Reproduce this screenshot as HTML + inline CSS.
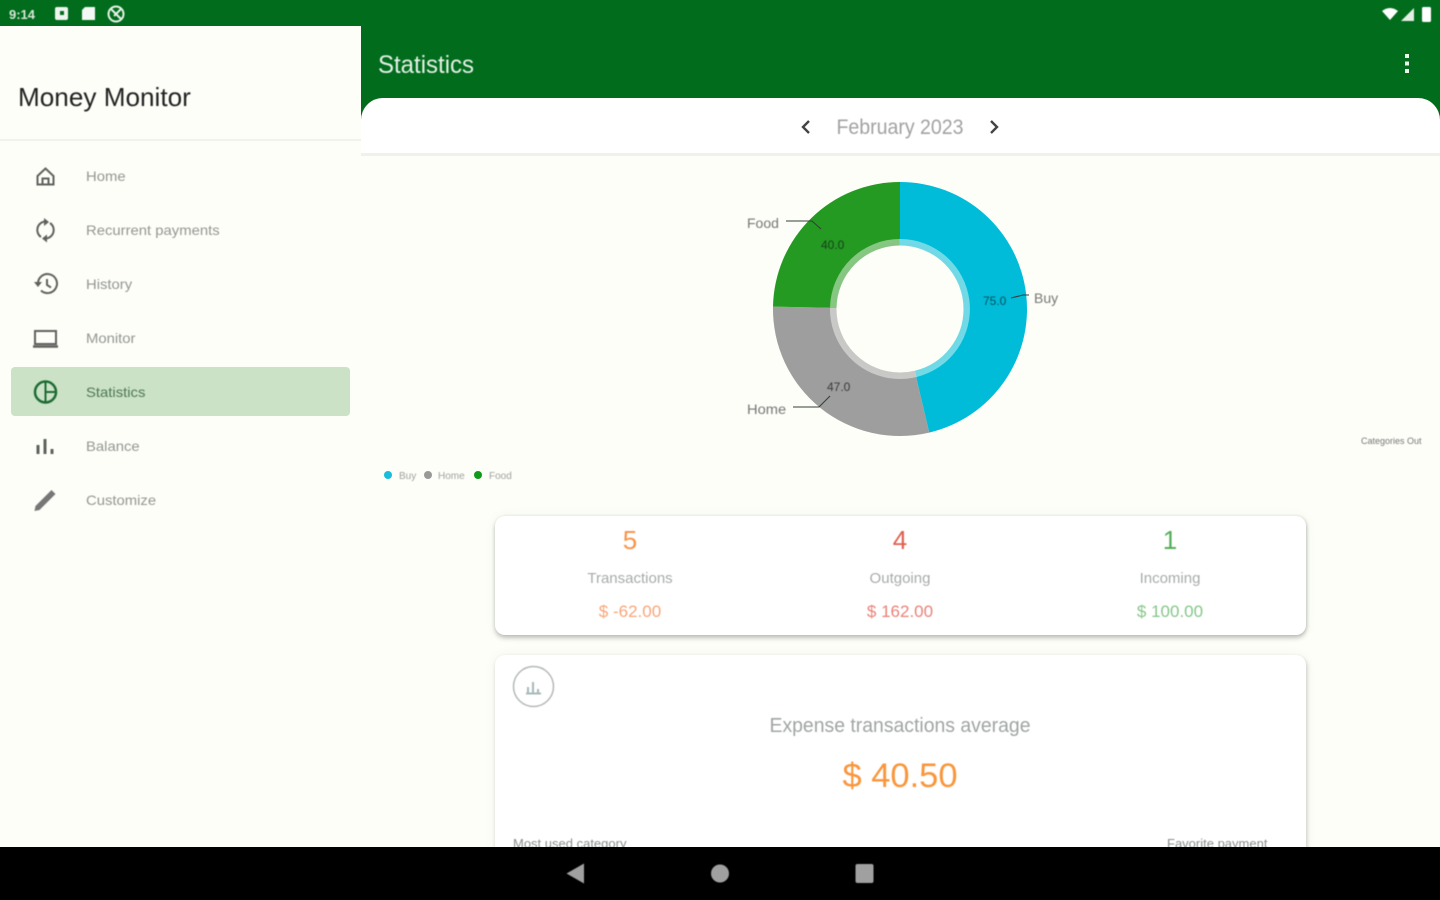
<!DOCTYPE html>
<html><head><meta charset="utf-8"><style>
html,body{margin:0;padding:0;width:1440px;height:900px;overflow:hidden;background:#fdfef8}
body{font-family:"Liberation Sans",sans-serif;position:relative}
.t{position:absolute;white-space:nowrap;filter:blur(.45px);line-height:1}
.c{transform:translateX(-50%)}
.a{position:absolute}
.nav{font-size:14px;color:#949692;left:86px;transform-origin:0 0;transform:scaleX(1.06)}
</style></head><body>
<div class="a" style="left:0;top:0;width:1440px;height:130px;background:#006c1c"></div>
<div class="a" style="left:361px;top:98px;width:1079px;height:56px;background:#fff;border-radius:22px 22px 0 0"></div>
<div class="a" style="left:361px;top:154px;width:1079px;height:693px;background:#fdfef8"></div>
<div class="a" style="left:361px;top:153px;width:1079px;height:3px;background:#f1f1ec"></div>
<div class="a" style="left:0;top:26px;width:361px;height:821px;background:#fdfef8"></div>
<div class="a" style="left:0;top:139px;width:361px;height:2px;background:#f1f2ed"></div>
<div class="a" style="left:11px;top:367px;width:339px;height:49px;background:#cbe2c6;border-radius:4px"></div>

<div class="t" style="left:9px;top:8px;font-size:13px;font-weight:bold;color:#d8e6d8">9:14</div>
<svg class="a" style="left:0;top:0;filter:blur(.4px)" width="1440" height="28">
<rect x="55" y="7" width="13" height="13" rx="2" fill="#eef5ee"/><rect x="60" y="11" width="4" height="4" fill="#006c1c"/>
<path d="M85 7h10v13H82V10z" fill="#f4f8f4"/>
<circle cx="116" cy="14" r="7.500" fill="none" stroke="#e8f1e8" stroke-width="2"/><path d="M111 9l10 10M121 9l-7 7" stroke="#e8f1e8" stroke-width="2"/>
<path d="M1382 11q8-6 16 0l-8 9z" fill="#fff"/>
<path d="M1401 21l13-13v13z" fill="#e5efe5"/>
<rect x="1422" y="7" width="9" height="15" rx="1.500" fill="#fff"/>
</svg>

<div class="t" style="left:378px;top:53px;font-size:25px;color:#e6f0e6;transform-origin:0 0;transform:scaleX(.96)">Statistics</div>
<svg class="a" style="left:1400px;top:52px" width="14" height="24"><rect x="5" y="2" width="4" height="4" fill="#eef5ee"/><rect x="5" y="9.500" width="4" height="4" fill="#eef5ee"/><rect x="5" y="17" width="4" height="4" fill="#eef5ee"/></svg>

<div class="t" style="left:18px;top:84px;font-size:26px;color:#222;transform-origin:0 0;transform:scaleX(1.005)">Money Monitor</div>

<div class="t nav" style="top:169px">Home</div>
<div class="t nav" style="top:223px">Recurrent payments</div>
<div class="t nav" style="top:277px">History</div>
<div class="t nav" style="top:331px">Monitor</div>
<div class="t nav" style="top:385px;color:#4d7755">Statistics</div>
<div class="t nav" style="top:439px">Balance</div>
<div class="t nav" style="top:493px">Customize</div>

<svg class="a" style="left:0;top:150px;filter:blur(.4px)" width="70" height="380" fill="none" stroke="#5f615e" stroke-width="2">
<path d="M37.500 26l8-7.500 8 7.500v8.500h-16zM42.500 34.500v-6h6v6"/>
<path d="M41 87A8.500 8.500 0 0 1 45 71.500M50 73A8.500 8.500 0 0 1 46 88.500"/><path d="M44 68l5 4-5 4zM47 84.500l-5 4 5 4z" fill="#5f615e" stroke="none"/>
<path d="M38 134a9.500 9.500 0 1 1 3 6.500"/><path d="M34 132h8l-4 5z" fill="#5f615e" stroke="none"/><path d="M47 129v6l4 2.500"/>
<rect x="35" y="181" width="21" height="13"/><path d="M33 196.500h25" stroke-width="2.500"/>
<circle cx="45.500" cy="242" r="10.500" stroke="#1d6b33" stroke-width="2.500"/><path d="M45.500 232v20M45.500 242h10" stroke="#1d6b33"/>
<path d="M38 304v-9M45 304v-15M52 304v-5" stroke-width="3"/>
<path d="M35.500 356l16-16 4 4-16 16-5 1z" fill="#777" stroke="none"/>
</svg>

<svg class="a" style="left:795px;top:115px;filter:blur(.3px)" width="210" height="24" fill="none" stroke="#444" stroke-width="2.400"><path d="M14 6l-6 6 6 6M196 6l6 6-6 6"/></svg>
<div class="t c" style="left:900px;top:117px;font-size:21px;color:#a0a2a0;transform:translateX(-50%) scaleX(.93)">February 2023</div>

<svg class="a" style="left:700px;top:160px;filter:blur(.35px)" width="400" height="300" viewBox="700 160 400 300">
<path d="M900 182A127 127 0 0 1 929.200 432.600L916.100 377.100A70 70 0 0 0 900 239Z" fill="#00bcd9"/>
<path d="M929.200 432.600A127 127 0 0 1 773 306.600L830 307.700A70 70 0 0 0 916.100 377.100Z" fill="#9e9e9e"/>
<path d="M773 306.600A127 127 0 0 1 900 182L900 239A70 70 0 0 0 830 307.700Z" fill="#259a22"/>
<circle cx="900" cy="309" r="67" fill="#fdfef8"/>
<g fill="none" stroke-width="7" opacity=".55" transform="rotate(-90 900 309)">
<circle cx="900" cy="309" r="67" stroke="#00bcd9" pathLength="162" stroke-dasharray="75 87"/>
<circle cx="900" cy="309" r="67" stroke="#9e9e9e" pathLength="162" stroke-dasharray="47 115" stroke-dashoffset="-75"/>
<circle cx="900" cy="309" r="67" stroke="#259a22" pathLength="162" stroke-dasharray="40 122" stroke-dashoffset="-122"/>
</g>
<g fill="none" stroke="#33403a" stroke-width="1.100">
<path d="M786 221h26l9 8"/><path d="M793 407h26l11-11"/><path d="M1011 298l12-3h6"/>
</g>
</svg>

<div class="t" style="left:747px;top:216px;font-size:14px;color:#777">Food</div>
<div class="t" style="left:747px;top:402px;font-size:14px;color:#777;transform-origin:0 0;transform:scaleX(1.05)">Home</div>
<div class="t" style="left:1034px;top:291px;font-size:14px;color:#777">Buy</div>
<div class="t" style="left:821px;top:239px;font-size:12px;color:#16401a">40.0</div>
<div class="t" style="left:827px;top:381px;font-size:12px;color:#3a3a3a">47.0</div>
<div class="t" style="left:983px;top:295px;font-size:12px;color:#07505f">75.0</div>

<div class="t" style="left:1361px;top:437px;font-size:9px;color:#777">Categories Out</div>
<div class="a" style="left:384px;top:471px;width:8px;height:8px;border-radius:50%;background:#19bcd9"></div>
<div class="t" style="left:399px;top:472px;font-size:10px;color:#a0a0a0">Buy</div>
<div class="a" style="left:424px;top:471px;width:8px;height:8px;border-radius:50%;background:#999"></div>
<div class="t" style="left:438px;top:472px;font-size:10px;color:#a0a0a0">Home</div>
<div class="a" style="left:474px;top:471px;width:8px;height:8px;border-radius:50%;background:#109a1a"></div>
<div class="t" style="left:489px;top:472px;font-size:10px;color:#a0a0a0">Food</div>

<div class="a" style="left:495px;top:516px;width:811px;height:119px;background:#fff;border-radius:10px;box-shadow:0 3px 5px rgba(0,0,0,.22),1px 0 3px rgba(0,0,0,.1),0 0 14px rgba(0,0,0,.04)"></div>
<div class="a" style="left:495px;top:655px;width:811px;height:210px;background:#fff;border-radius:10px;box-shadow:1px 2px 4px rgba(0,0,0,.2),0 0 14px rgba(0,0,0,.04)"></div>

<div class="t c" style="left:630px;top:527px;font-size:26px;color:#f7954a">5</div>
<div class="t c" style="left:900px;top:527px;font-size:26px;color:#e0604f">4</div>
<div class="t c" style="left:1170px;top:527px;font-size:26px;color:#56ad5a">1</div>
<div class="t c" style="left:630px;top:571px;font-size:15px;color:#a8aaaa">Transactions</div>
<div class="t c" style="left:900px;top:571px;font-size:15px;color:#a8aaaa">Outgoing</div>
<div class="t c" style="left:1170px;top:571px;font-size:15px;color:#a8aaaa">Incoming</div>
<div class="t c" style="left:630px;top:603px;font-size:17px;color:#f9a478">$ -62.00</div>
<div class="t c" style="left:900px;top:603px;font-size:17px;color:#ea8078">$ 162.00</div>
<div class="t c" style="left:1170px;top:603px;font-size:17px;color:#84c688">$ 100.00</div>

<svg class="a" style="left:510px;top:664px;filter:blur(.4px)" width="48" height="46" fill="none"><circle cx="23.500" cy="22.500" r="20" stroke="#b5b8b8" stroke-width="1.500"/><path d="M18 29v-6M23 29V18M28 29v-4M16 29.500h15" stroke="#a8b8b8" stroke-width="2"/></svg>

<div class="t c" style="left:900px;top:716px;font-size:20px;color:#a0a4a4;transform:translateX(-50%) scaleX(.97)">Expense transactions average</div>
<div class="t c" style="left:900px;top:759px;font-size:34.500px;color:#f9963c">$ 40.50</div>
<div class="t" style="left:513px;top:837px;font-size:13px;color:#8a8c8c">Most used category</div>
<div class="t" style="left:1167px;top:837px;font-size:13px;color:#8a8c8c">Favorite payment</div>

<div class="a" style="left:0;top:847px;width:1440px;height:53px;background:#000"></div>
<svg class="a" style="left:0;top:847px;filter:blur(.5px)" width="1440" height="53" fill="#a0a0a0">
<path d="M566.500 26.500L584 16.500v20z"/><circle cx="720" cy="26.500" r="9"/><rect x="855.500" y="17" width="18" height="19" rx="2"/>
</svg>
</body></html>
